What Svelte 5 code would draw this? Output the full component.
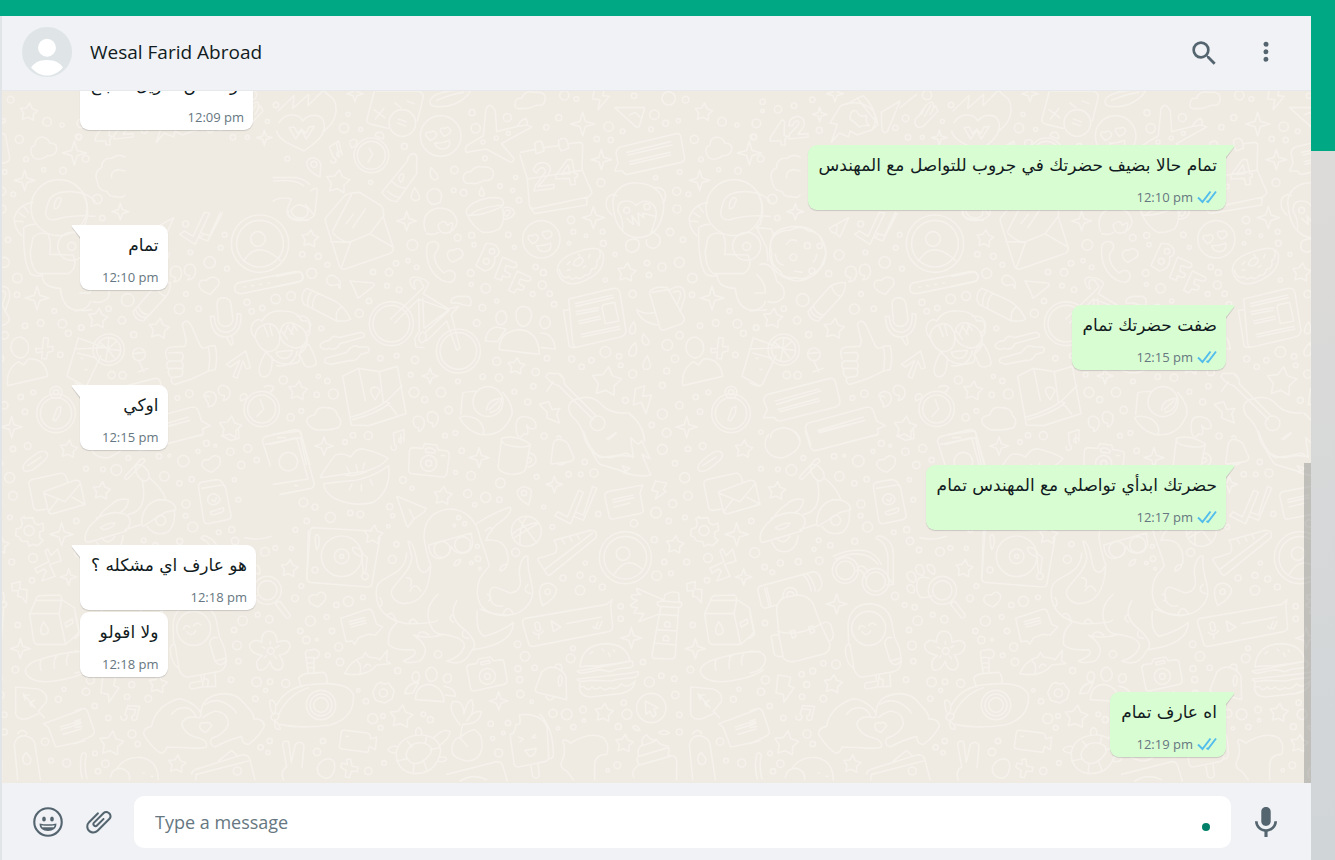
<script lang="ts">
	import { onMount } from 'svelte';

	type Message = { text: string; time: string; out?: boolean; tail?: boolean };
	type Sheet = {
		x: number;
		y: number;
		circles: number[][];
		stars: number[][];
		sparkles: number[][];
		paths: string[];
	};

	const contact = 'Wesal Farid Abroad';

	const messages: Message[] = [
		{ text: 'لو ممكن تحويل المبلغ', time: '12:09 pm' },
		{ text: 'تمام حالا بضيف حضرتك في جروب للتواصل مع المهندس', time: '12:10 pm', out: true, tail: true },
		{ text: 'تمام', time: '12:10 pm', tail: true },
		{ text: 'ضفت حضرتك تمام', time: '12:15 pm', out: true, tail: true },
		{ text: 'اوكي', time: '12:15 pm', tail: true },
		{ text: 'حضرتك ابدأي تواصلي مع المهندس تمام', time: '12:17 pm', out: true, tail: true },
		{ text: 'هو عارف اي مشكله ؟', time: '12:18 pm', tail: true },
		{ text: 'ولا اقولو', time: '12:18 pm' },
		{ text: 'اه عارف تمام', time: '12:19 pm', out: true, tail: true }
	];

	let draft = '';
	let chat: HTMLElement;

	// wallpaper tile, drawn at three times its size and repeated sideways
	const tile = 2025;
	const copies = [-1, 0, 1, 2, 3];

	const sheets: Sheet[] = [
		{
			x: 0,
			y: 0,
			circles: [
				[204,70,6],[192,111,14],[242,115,6],[373,166,9],[22,203,7],[272,274,6],[523,237,11],[521,298,7],[551,305,10],[576,65,9],
				[682,80,12],[587,112,14],[609,153,6],[649,141,6],[685,127,6],[615,202,7],[707,259,6],[660,285,7],[698,298,6],[717,328,8],
				[799,109,8],[836,80,9],[853,13,14],[889,24,7],[986,107,14],[1028,121,7],[950,144,8],[992,147,8],[1062,14,8],[1166,22,20],
				[1217,26,10],[1123,71,14],[1157,97,9],[1195,89,6],[1113,115,7],[1243,145,12],[1326,92,13],[1371,102,6],[1422,138,8],[1263,205,7],
				[1316,236,6],[1374,239,10],[1199,243,7],[1127,260,6],[963,275,12],[1190,301,12],[1225,310,7],[1191,354,12],[873,387,11],[880,422,7],
				[918,434,5],[867,457,5],[968,422,7],[970,457,9],[1170,423,11],[1209,446,8],[1005,490,6],[533,440,10],[575,433,9],[582,461,6],
				[685,431,8],[703,469,6],[397,462,16],[348,517,8],[384,509,6],[410,529,7],[327,544,11],[279,543,8],[67,490,8],[115,496,9],
				[142,521,7],[95,547,15],[33,615,13],[321,584,7],[357,596,8],[267,630,8],[238,667,12],[572,546,10],[574,580,6],[617,592,14],
				[650,630,6],[607,650,10],[590,696,10],[767,528,8],[790,545,9],[787,582,12],[758,609,7],[809,608,8],[822,640,8],[1101,516,8],
				[1146,528,12],[1107,552,8],[1198,514,15],[1237,561,14],[976,567,6],[1058,609,11],[1236,611,8],[1199,733,11],[1162,762,16],[1260,704,8],
				[1307,696,10],[1348,660,7],[1372,698,13],[1390,727,9],[1429,710,8],[1366,791,8],[1185,803,11],[1160,840,9],[1058,849,12],[1017,796,8],
				[1022,823,7],[976,783,16],[934,808,8],[875,804,9],[905,827,8],[801,802,8],[650,811,12],[608,857,8],[657,860,11],[767,843,11],
				[760,886,8],[703,902,7],[743,933,9],[534,871,7],[405,807,11],[350,794,7],[301,802,8],[124,712,7],[115,856,6],[142,870,8],
				[160,909,15],[110,911,8],[64,960,7],[32,979,11],[10,867,12],[392,851,7],[402,904,15],[434,926,9],[483,904,14],[506,957,11],
				[495,1034,7],[526,1026,7],[792,1035,9],[1036,928,9],[1147,883,9],[1147,969,15],[1198,943,11],[1247,918,8],[1260,962,8],[1285,904,7],
				[1115,1002,8],[1160,1025,13],
				[482,135,61],[274,193,52],[274,193,42],[367,96,40],[784,445,56],[334,698,66],[334,698,55],[535,780,66],[535,780,55],
				[1353,967,58],[1353,967,47],[1353,904,18],[1353,904,8],[624,932,45],[953,997,22],[1362,350,84],[1400,466,12],[1400,466,42],
				[636,481,8],[619,511,9],[1040,358,9],[1101,347,9],[102,220,9]
			],
			stars: [[174,273,37],[90,443,27],[1040,545,29],[1271,64,28],[54,900,30],[709,826,26],[980,873,46]],
			sparkles: [[908,99,36],[964,206,31],[1259,268,31],[1408,186,36],[380,390,30],[940,380,33],[1296,621,36],[450,855,24],[1220,1008,32],[225,8,24]],
			paths: [
				// flaming heart
				'M-3 95C20 60 60 70 68 90C85 68 125 65 132 95C140 135 100 160 72 180C45 165-5 150-10 120M27 110l20 34 18-26 14 26 24-38-16 2-10 20-12-14-12 14-10-20zM-6 60L42 14L38 52L86 10L84 44L132-4C140 20 170 10 168 60C165 90 150 105 132 120',
				// game box
				'M283 0L260 88Q262 98 275 100L325 112M290 0H415Q430 5 430 18L412 90M282 56l32 24M312 52l-26 32M355 84l24 8M352 96l24 8M382 30l20 8M345 36l18 14',
				// leaf and faces
				'M450 30C455 10 500-8 572 0C545 40 500 50 465 46Q450 44 450 34M470 28Q510 10 550 4M438 134q-4-14 14-10 8-10 18 4 0 14-20 20zM482 122q-4-14 14-10 10-8 16 6 0 12-20 18zM464 156q24 2 44-8 6 24-20 26-20 0-24-18zM745 444q-4-14 14-10 8-10 16 4 0 14-18 20zM788 432q-4-14 12-10 10-8 16 6 0 12-18 16zM770 464q22 2 42-8 4 24-18 26-20 0-24-18z',
				// plane, clouds, bolts
				'M618 54Q630 30 646 60L650 122L712 106Q722 86 738 82Q744 96 740 102L755 108L664 158L702 202Q700 216 690 212L618 174L560 184Q552 176 560 164L610 134zM712 106l28-4M705 40q0-20 20-18 8-24 36-18 40-4 34 24-2 18-24 14-30 14-46 10-22 4-20-12zM550 262q0-22 22-20 16-20 36-14 34-2 32 24-4 20-28 16-24 14-38 8-22 6-24-14zM942 0l-4 24 22 2-6 30 34-40-20-2 6-24M1066 894l28-10-6 32 26-4-16 56-14-34-24 8zM778 940l28-8 10 24 24-4-10 16 8 28-38-16 2-16z',
				// paper planes
				'M1004 50H1094L1078 106Q1070 112 1064 104zM1048 72l18-8 14 14M210 570l70 6q6 6 0 10l-46 36-10-26z',
				// notes and clock hands
				'M152 208a8 8 0 1 0 8-8L148 168l28-18 10 42a8 8 0 1 0-8 6L170 160M268 172l10 18-14 24M210 150q16-10 22 2-4 16-18 18-6-10-4-20zM285 134q4-14 20-10 10 12 4 20z',
				// drops, pin, lipstick
				'M120 258Q80 240 80 215Q86 196 106 202Q124 210 122 226zM452 230q24 20 22 32-8 10-20-2-6-12-2-30zM404 290q18 24 14 34-14 10-24-2-2-14 10-32zM604 288q12 18 8 26-10 4-14-4 0-10 6-22zM306 304L382 210Q384 190 400 188Q414 192 410 210V248L350 332Q322 330 306 304zM336 272q20 20 44 20M322 300q18 18 40 20M356 262q6-18 14-12 4 16-8 24z',
				// open envelope
				'M136 382L192 316Q200 306 238 304L300 342Q314 352 310 378L340 470Q340 484 328 488L196 534Q182 536 178 524L136 390zM158 420L214 312M158 426Q190 458 212 452L270 428L310 376M152 452L212 454L184 530M270 428L338 468M198 398l22-28M218 410l38-56',
				// telescope
				'M-20 260H50Q80 268 88 280M-20 270Q50 264 70 284M92 300Q110 284 112 300L104 372Q80 396 40 386Q14 372 24 348L34 324Q0 316-20 330M32 360q20-32 50-8 8 24-16 30-26 0-34-22M76 340l24 30',
				// baby, cup
				'M442 308q10-18 30-14 20 14 8 40-20 12-32 0-10-14-6-26zM436 420Q420 368 468 352Q520 346 532 392Q526 420 500 426Q478 430 474 402Q496 380 502 404Q530 380 510 426M440 428Q460 434 476 424M562 372Q550 356 580 336Q630 312 666 324Q680 344 650 354Q600 376 562 372zM562 372Q578 408 608 424Q640 426 660 412Q676 390 668 354M572 372Q590 350 668 342M672 350q26-6 32 16-12 20-34 18M672 370q4-16 18-12 2 12-10 18z',
				// calendar
				'M722 184L762 176M792 170L838 164M866 158L900 154Q910 156 908 166L906 236L936 304Q934 312 924 318L764 352Q750 354 748 342L742 264L720 192M742 264L904 238M752 352L764 368L920 342L922 318M764 156q22-14 24 6l4 18-24 8zM836 148q20-14 26 4l4 20-22 8q-10-16-8-32zM760 238Q768 210 796 216Q820 226 806 250L774 286L822 280V292L762 300L766 284L796 244Q796 230 784 230Q772 236 770 246zM862 206h14l8 42h8v10l-8 2 2 20-14 2-4-20-40 2v-12zM864 222l-20 28 26-2z',
				// speech bubble
				'M1008 186Q1010 174 1020 168L1190 128Q1200 126 1202 136L1214 200Q1214 210 1204 214L1042 250Q1034 252 1028 240L1004 240L1014 216zM1040 184L1172 152M1044 192L1176 162M1048 212L1170 184M1050 220L1172 192M1280 190q-8-22 10-28 0-24 24-24 18 6 20 18 26 0 20 24-8 16-26 14-24 18-42 6z',
				// monkeys
				'M1000 350C990 300 1030 274 1070 276C1120 276 1160 310 1150 360C1140 420 1110 440 1070 440C1030 436 1004 400 1000 350zM996 372Q970 350 982 320Q1000 304 1010 314M1122 290Q1160 288 1156 320Q1154 334 1148 336M1014 360Q1012 328 1042 330Q1062 332 1068 344Q1086 324 1110 334Q1136 350 1126 386L1112 428M1014 360Q1030 384 1028 414M1040 382L1060 400L1056 374L1078 404L1074 366L1092 380L1088 366L1126 376M1040 452Q1030 480 1056 484Q1084 478 1076 450Q1060 436 1040 452M1100 446Q1094 470 1122 472Q1148 462 1138 436L1116 422',
				// phone, heart, letters
				'M440 474Q440 448 466 452Q480 458 474 474L464 490Q460 520 492 546Q510 530 524 546Q530 564 512 574Q480 574 456 540Q438 510 440 474M502 492q0-18 20-14 10-12 24 2 8 14-6 22l-22 12q-14-8-16-22zM618 458q36-4 40 26-4 12-14 14 4 36-30 42l-26-16zM668 498l40 18q8 14-8 14l-22-6-4 16 16 8q4 14-14 10l-8-4-4 14-20-8zM712 540l38 18q8 14-10 12l-20-6-4 14 16 8q2 14-14 10l-8-2-8 12-16-8z',
				// donut
				'M832 540Q830 500 900 480Q960 460 970 490Q976 540 920 566Q850 600 832 540M838 536Q850 570 866 556Q876 572 888 558Q900 570 914 552Q930 556 934 536Q956 530 950 510Q966 498 958 478M880 520q4-18 24-20 12 8-2 20-14 10-22 0M870 512l-8 8M930 490l-4 10M900 496l-4-6M862 538l8-2M910 530l8-6',
				// pencil, spanner, toothpaste
				'M66 626Q64 604 80 592L160 628Q190 642 212 684Q204 692 170 690L72 640zM98 598Q80 616 84 642M114 606Q96 624 98 650M170 690Q164 660 184 648M-10 556L60 542Q76 556 64 570L-10 586M120 766Q120 752 148 748Q160 730 176 740L242 724Q256 726 252 738L180 758Q170 780 148 772Q130 780 120 766zM134 814Q130 800 150 798L200 784Q220 756 236 768L262 768Q272 774 264 784L242 790Q230 812 212 808L150 820zM140 570q0-20 22-16 24 12 18 38-4-2-6-12-28 10-34-10z',
				// bicycle
				'M332 684L412 608L432 588L420 568Q396 560 404 588Q410 600 398 590Q380 562 402 558Q440 562 446 578L430 608L506 654L536 646M344 696L416 624M416 624L418 720L404 742L408 768L432 770M428 622L432 712L502 660M420 626L508 658L438 722M500 690L440 750M500 690L530 778L540 772L514 670L536 646M514 636Q508 622 534 616H560Q578 618 572 644Q550 644 536 636zM418 734q10-20 20-4 4 18-12 26-14-8-8-22z',
				// people
				'M708 672q0-26 24-26 26 4 22 32-6 28-26 28-20-6-20-34zM648 678q4-22 22-18 14 10 8 30-8 14-22 10-10-10-8-22zM780 692q4-20 20-16 16 12 8 30-8 10-20 6-10-8-8-20zM658 776Q658 720 718 716Q776 720 778 790zM616 750Q620 712 650 708L678 714L652 752zM782 726Q820 726 826 774L784 770',
				// newspaper, oil can, lines
				'M866 624L1000 592Q1016 590 1020 606L1038 720Q1034 736 1020 738L892 768Q880 770 878 758zM866 656L850 658L868 766Q878 772 888 768M886 638L998 612M888 646L1000 620M888 662L956 650M890 670L954 658M896 690L960 676M898 698L962 684M904 730L1018 706M906 738L1020 714M966 650Q966 642 974 640L1004 634L1016 690L976 698zM1108 604Q1120 584 1162 590L1212 680Q1214 692 1204 698L1150 718Q1138 716 1138 704zM1116 604L1166 596M1126 664Q1096 672 1070 656Q1080 692 1132 702M1170 596Q1216 570 1214 620L1200 662M1180 604Q1202 594 1202 612L1192 640',
				// drops
				'M1062 692Q1040 720 1054 728Q1070 730 1066 706zM1090 728Q1080 752 1096 762Q1112 762 1106 748zM1066 754Q1038 782 1050 794Q1070 800 1070 772zM1102 794Q1082 822 1092 834Q1110 838 1112 822z',
				// map, cloud
				'M188 856L236 832L298 842L352 826L378 968L266 1004L214 1002zM236 832l20 96M298 842l12 90M214 978Q280 960 320 930L366 884M218 986Q290 968 330 936M320 930L350 970M286 926Q266 902 274 892Q292 882 300 900zM84 1000Q72 976 104 972Q112 944 138 950Q170 950 172 974Q190 986 176 1010Q150 1018 128 1016Q100 1022 84 1000',
				// turtle and planet
				'M542 970L548 906Q560 900 590 902M668 904Q700 940 696 970Q670 1040 600 1030Q560 1020 538 980Q560 970 590 984Q616 1004 610 1028M620 958Q620 926 664 922Q664 960 630 964M628 956L656 930M400 990q0-16 18-14 18 6 14 26-4 16-16 20v-12q-16 2-16-20zM442 976q0-16 18-14 18 6 14 26-4 16-16 20v-12q-16 2-16-20zM710 1024Q700 970 742 978Q770 984 768 1010Q750 1020 740 1002Q750 1040 732 1028Q716 1050 710 1024',
				// guitar
				'M798 858Q800 842 820 848Q850 840 854 880L950 976M940 986L836 884Q816 880 798 858M874 974Q850 930 900 922Q940 910 968 944Q990 968 1040 966M874 974Q906 1000 916 1050Q940 1100 990 1100Q1020 1090 1050 1096M1046 966Q1090 1000 1094 1050M980 1044L1008 1024M800 900l20-28M836 848l16 16',
				// helmet figure
				'M1328 340Q1336 300 1400 302Q1450 306 1470 330M1328 340Q1310 390 1350 386Q1400 370 1470 376M1348 352Q1346 330 1360 320Q1374 320 1366 334Q1360 356 1348 352M1284 334Q1240 340 1228 380Q1226 410 1250 434M1290 400Q1270 400 1256 410Q1254 520 1278 550Q1300 560 1310 552M1242 366l18 12M1232 390l22 2M1256 346l14 18M1284 440Q1300 420 1330 430Q1340 460 1334 490L1404 492Q1420 530 1390 548L1300 548Q1276 530 1276 480zM1312 550Q1310 590 1366 592Q1370 640 1400 654Q1420 662 1460 656M1430 550Q1460 580 1455 606H1424',
				// person, glass, lens
				'M1218 764Q1222 738 1248 738Q1276 750 1270 780Q1260 804 1240 800Q1216 790 1218 764zM1208 884Q1202 836 1240 812L1256 822L1270 804Q1320 800 1328 856zM1292 772l20 2 4-34 14 2-2 26 16-2v14l-16 4-4 20-14-2 2-20-18 4zM1420 740L1386 856L1440 886M1418 786L1470 800M1344 986l12-34 12-6-2 22-14 22z',
				// masked monkey, left edge
				'M52 676Q84 670 92 700Q90 720 78 726Q90 770 60 786M52 780Q40 830-10 824M58 790Q64 764 86 760Q110 800 108 820Q90 834 74 824zM4 720L22 744M20 706L40 730M38 698L52 718'
			]
		},
		{
			x: 0,
			y: 1020,
			circles: [
				[219,13,8],[265,14,12],[195,33,7],[545,59,8],[527,124,6],[573,134,13],[661,156,14],[369,147,10],[396,172,6],[770,137,7],
				[866,130,8],[902,130,7],[942,126,12],[914,93,8],[1147,55,15],[1224,54,8],[1268,45,10],[1185,97,8],[1214,140,15],[1224,194,13],
				[1178,218,12],[1128,245,16],[1062,277,11],[1166,270,8],[1215,259,7],[1414,270,8],[955,249,8],[791,228,6],[817,288,7],[658,206,8],
				[617,199,15],[584,221,6],[563,188,12],[329,227,9],[338,254,6],[325,286,5],[349,340,8],[337,385,12],[211,246,8],[241,250,10],
				[151,259,15],[105,228,9],[70,214,13],[80,270,8],[46,296,7],[34,352,6],[64,465,7],[45,502,10],[205,511,15],[169,522,8],
				[249,499,7],[140,558,7],[91,570,15],[61,600,8],[79,627,11],[111,626,4],[156,600,8],[176,648,12],[143,673,7],[180,693,11],
				[353,719,9],[235,778,5],[258,811,8],[278,863,15],[309,855,7],[302,890,7],[129,930,8],[111,963,11],[312,996,7],[265,1020,11],
				[430,850,7],[451,866,9],[474,670,11],[707,364,12],[713,640,10],[735,676,14],[714,713,9],[764,710,8],[719,746,9],[721,789,11],
				[755,812,5],[684,876,8],[632,878,8],[638,922,6],[670,906,5],[656,966,12],[819,847,12],[860,850,16],[909,836,10],[912,868,5],
				[880,888,8],[834,892,5],[872,682,13],[879,652,7],[849,441,9],[900,433,9],[938,444,9],[916,396,6],[900,478,14],[967,468,9],
				[1022,526,8],[1022,563,8],[1130,434,14],[1153,393,8],[1173,427,7],[1123,326,9],[1220,393,9],[1284,381,13],[1281,448,8],[1238,582,8],
				[1089,693,8],[1108,753,15],[1144,734,8],[1183,743,8],[1231,716,10],[1186,792,11],[1198,851,8],[1198,903,9],[1031,815,8],[1041,850,15],
				[1015,887,9],[1012,1003,10],[983,1018,5],[1360,805,9],[1377,775,6],[1320,932,11],[1338,989,7],[1385,996,12],[17,757,12],
				[446,97,24],[446,97,9],[739,301,45],[185,376,61],[185,376,22],[185,376,6],[255,436,10],[1036,380,78],[1036,380,64],[1029,368,20],
				[123,822,44],[123,822,22],[123,822,33],[622,736,24],[622,736,9],[1114,831,44],[1272,299,15],[310,786,12],[486,355,24],[548,341,24],
				[105,417,9],[803,482,8],[732,186,8],[25,92,28],[594,383,8],[592,346,6],[574,396,5],[600,413,4],[536,260,6],[554,278,6],[523,283,4]
			],
			stars: [[489,195,29],[280,312,30],[28,413,27],[1391,55,28],[1185,342,28],[972,846,29],[1033,938,28],[364,858,36]],
			sparkles: [[132,45,28],[597,80,30],[823,160,25],[1370,310,35],[1391,438,25],[1054,621,32],[1246,653,30],[656,810,28]],
			paths: [
				// phone, lips
				'M-30 40L50 20L84 144L-20 160M-20 10L60 0L102 156Q104 168 94 172L0 190M44 164h8M122 136Q150 90 166 72Q190 64 212 78Q228 50 250 54Q300 66 324 82Q310 104 260 120L122 140zM132 158Q150 156 200 150Q260 150 326 104Q334 180 280 214Q220 230 160 200Q130 180 132 158M192 130Q210 140 260 122M200 108l10 20M228 100l4 20M254 96l-6 18M208 176l8-16M244 180v-20M278 162l-8-16',
				// camera, note
				'M388 60Q390 50 400 50L428 52L434 38L470 42L474 56L500 60Q508 62 508 72L500 130Q496 138 488 138L394 128Q386 126 386 116zM436 54q14-8 30 4l-2 8-26-2zM484 74h10M334 46a8 8 0 1 0 10-4L340 6L372-4V30a8 8 0 1 0-8 6L362 10',
				// mug, bell
				'M664 22Q710 10 752 40Q740 52 700 46Q660 40 664 22zM664 28L654 108Q660 128 700 130Q736 128 738 110L750 44M744 66Q770 66 768 92Q756 112 738 106M742 80Q756 78 754 90Q748 98 740 94M812 96L820 38Q826 22 842 26Q864 32 866 44L882 80Q880 90 870 92L824 98Q812 100 812 96M830 18q8-8 14 2M832 98q10 8 24-2',
				// guitar foot, flame
				'M910 0Q930 60 960 80Q1000 78 1040 66L1060 80L1052 20L1074 40L1086 30L1110 84L1086 70L1112 132Q1080 140 1030 124L1050 112L1026 104L1040 124L960 100Q940 80 910 0M986 26L1008 8',
				// paper clip, envelopes
				'M1254 112Q1250 96 1300 64Q1326 54 1328 74Q1324 88 1280 118Q1256 126 1254 112M1268 104L1308 78M1272 160Q1270 150 1280 146L1370 126Q1384 128 1388 154M1272 160L1286 230Q1290 240 1300 238L1324 234M1316 182L1410 148Q1422 146 1426 156L1440 220L1344 248Q1332 250 1330 240zM1316 186L1380 212L1426 158M1332 240L1358 206M1440 220L1400 198',
				// pins, ticks, speech
				'M746 222Q708 200 712 180Q730 156 754 178Q754 196 746 222zM824 254L834 242L862 258L896 178L910 184L872 278zM888 244L910 252L938 166L950 172L910 268L880 256M974 194Q976 184 984 182L1088 162L1080 186L1090 240Q1088 246 1080 248L1000 264Q990 266 988 258zM998 206L1060 192M1000 214L1062 200M1002 228L1050 216M1126 150L1160 156L1150 176L1158 182L1126 204L1134 182L1116 178z',
				// paper plane
				'M350 196L438 232L434 242L402 264L384 288L380 284zM388 236L402 264',
				// turntable
				'M96 290L276 300M300 320L276 458Q274 468 264 468L90 454Q80 452 80 442L90 300Q92 288 104 290M106 314q10-10 12 14 0 20-8 28-6-20-4-42zM218 350Q240 346 250 370L262 380L256 426M218 350Q214 366 246 378L250 426',
				// octopus
				'M432 322C430 260 470 236 512 234C560 236 590 270 600 320C610 350 616 360 628 404C610 430 590 440 592 490C598 540 630 550 680 552C740 552 760 500 758 480C756 440 740 430 744 376C730 370 716 400 718 430C726 460 720 484 690 486C650 470 640 460 630 480C626 520 650 530 668 524M432 322Q440 370 452 402C450 480 420 518 370 518C330 510 330 480 340 470C360 440 390 420 396 380L384 330C400 330 410 380 412 400C420 430 440 430 448 408M380 366C376 440 300 430 290 470C280 540 330 570 380 578C430 580 470 572 472 568M590 278Q630 250 690 228Q700 240 670 266Q630 290 618 328Q680 320 684 380Q686 410 664 420M474 490Q430 530 450 580Q460 612 490 610Q560 620 552 650Q540 680 500 690Q550 710 574 660Q600 640 556 598Q500 560 530 510M350 576Q320 600 326 640Q340 660 400 656Q420 670 370 690Q380 700 420 690Q460 650 400 612Q440 626 490 610M592 540Q586 600 612 616Q670 600 700 574Q700 640 580 656M600 534Q660 560 690 552M446 342L574 306L578 340Q570 370 540 366Q520 364 514 346Q508 380 480 382Q450 384 446 342zM380 440q20 0 12 26M390 480q16-30 32 0M300 500q14 20-2 28M320 554q20-20 28 18M388 574q10-20 24 2M616 300q20-20 20 0M660 420q0-20 20-20M744 460q-20 20 8 28M670 548q12-30 30 0M622 490q20 10 4 20M520 550q-20 10 0 24M550 600q-10 20 16 22M410 620q10-30 36-8M522 404q4-20 20-18-4 20-20 18',
				// basketball, sneaker
				'M716 264L770 336M702 320L776 276M740 256Q716 290 720 340M774 274Q730 280 696 310M822 328L930 298Q954 296 948 320L810 432Q800 434 796 422L774 388Q770 380 790 378L826 366Q836 350 822 328zM796 414L938 306M846 324l8 14M868 316l8 14M890 310l8 14',
				// person on badge
				'M1002 430Q1040 370 1086 414',
				// gear, bandage, bolt
				'M1258 262l26-2 4 16 12 6 14-6 2 22-12 6v16l10 8-16 16-14-4-12 6-4-14-18-2-8-12-10-4 2-20 14-4 4-12-4-14 10-8zM1320 360l8-6 10 20 20-20 10 36-34 10 16 36-40 14 14-30-8-6-20 12-6-14 42-20zM1220 458L1246 452L1244 474L1266 476L1264 516L1250 498L1238 496L1240 478L1222 480zM290 760l12-6 12 6 12-4 8 12 8 10-2 12-4 14-12 6-10 6-14-4-12-4-6-12-4-12 6-12z',
				// heart, chat note
				'M86 506Q88 488 110 492Q124 474 136 492Q140 504 128 516L114 528Q88 520 86 506zM182 562L266 534Q276 534 278 544L290 580L308 588L286 612L264 610L236 620L224 640L216 630L198 632zM208 572L254 560M210 580L256 568M214 588L258 576',
				// submarine
				'M-10 822Q20 764 100 760Q200 750 220 790Q226 860 150 882Q60 894 0 880M64 768L56 742Q60 732 80 728L130 724Q140 726 142 754M84 724L76 666Q78 656 90 658Q110 650 118 666Q116 686 102 680L102 722M82 680h20M84 696h18M86 710h18',
				// fish, people
				'M194 728Q210 690 248 678L256 664L266 678Q290 680 300 686L322 658L320 690L332 698L290 702Q260 740 194 728M232 690Q246 700 240 732M252 710Q262 692 272 704M438 724q6-18 22-14 16 12 10 30-8 14-22 10-12-10-10-26zM396 736q4-18 18-12 8 12 2 24-12 8-18 0zM490 740q6-16 20-10 8 12 0 22-12 6-18-2zM406 806Q408 760 450 760Q490 770 492 812zM374 788Q380 756 416 754L398 786zM492 766Q526 770 526 796L496 792',
				// second camera
				'M560 710Q560 702 570 700L590 698L596 684L632 678L640 690L662 686Q670 686 672 694L682 750Q680 758 672 760L582 780Q574 780 572 772zM602 694l26-6 2 8-26 6z',
				// plant
				'M540 882Q500 830 520 812Q550 806 552 850Q560 810 576 806Q588 840 560 870Q580 836 604 842Q600 880 548 880L540 920Q560 900 584 896Q610 910 606 950Q600 990 560 990Q510 980 516 950Q520 920 540 920M540 920L562 946',
				// turtle
				'M348 966Q360 910 430 912Q480 920 482 960Q470 1030 400 1028Q350 1020 348 966zM378 970Q390 930 430 936Q460 944 452 966Q430 1000 400 998Q380 990 378 970M408 912Q404 890 418 890Q428 896 424 912M462 920Q490 890 510 902Q510 920 478 944M350 946Q330 944 324 956Q330 966 348 966M478 980Q500 974 500 986Q490 996 472 990M382 930l14 18M440 914l-4 22M480 950l-28 6M350 990l28-6M400 1026l2-28M440 1016l-10-28',
				// camcorder, fingers
				'M178 946L184 904Q186 896 196 898L262 906Q272 908 272 924L290 918L286 956L268 946L264 964L188 954Q178 954 178 946M198 916h8M8 940Q10 926 26 932L34 994L46 940Q64 926 72 944L66 1010M8 940L20 1008Q0 1020 10 1046M140 984Q166 980 164 1010Q160 1040 140 1042Q110 1036 112 1010Q120 988 140 984zM200 986l12-2 4 22 18 2-2 14-18-2-6 20-12-2 2-20-16-10 4-12 16 4z',
				// ice cream
				'M690 910Q706 910 708 880Q726 886 718 852Q750 846 780 862Q804 880 802 900L806 978Q804 990 794 992L714 1008Q704 1008 702 998zM780 850Q820 890 820 970Q820 984 806 984M716 918l14 6-10 8M766 910l-10 10 12 0M734 958L768 952Q766 976 748 976zM752 1000L758 1036Q770 1048 778 1034L774 996',
				// ticket, note
				'M728 576Q726 566 736 562L980 520L996 506L992 524L998 590Q996 600 986 602L760 646Q748 648 746 638zM764 578q8-10 14 0l4 18q-8 8-14 0zM760 604q16 14 30-4M776 610v14M814 570L842 588L820 602zM860 578L964 558M938 586l8 8 8-22M950 592l6 2 10-22',
				// burger
				'M900 708Q904 640 980 638Q1040 640 1050 690Q1020 696 960 704Q920 704 900 708zM892 720L940 712L1056 690Q1066 704 1050 710L1010 714L990 722L960 716L920 724Q896 730 892 720M892 744L950 738L1040 728L1074 722Q1080 736 1060 740L1020 744L990 750L930 748Q892 756 892 744M900 756Q896 772 912 766Q922 784 936 768Q950 780 960 768Q974 782 990 770Q1010 780 1024 758Q1040 776 1066 750M898 770Q900 796 930 798L1020 788Q1060 780 1064 756M930 668l8-6M966 654l6 6M990 676l-4-10M1000 656l4 6',
				// lighthouse
				'M1152 508L1154 492Q1172 478 1196 486L1198 512M1132 514Q1130 524 1140 526L1198 530Q1208 524 1204 514L1142 510zM1142 528L1116 672Q1116 682 1126 682L1176 684Q1186 682 1186 672L1196 530M1136 550L1194 554M1132 596L1190 600M1124 636L1188 642M1154 586v-8q8-12 16 0v10zM1150 628v-8q8-12 16 0v10zM1150 506L1070 472Q1070 486 1082 490L1056 492Q1048 504 1072 508L1052 522Q1054 530 1072 530L1062 546L1092 548L1076 572L1140 548',
				// milk, bread
				'M1274 548L1292 508Q1294 496 1304 494L1362 492Q1370 494 1370 506L1408 530L1422 600Q1420 610 1410 616L1382 640L1296 640Q1288 638 1286 630zM1274 548L1362 548L1382 640M1362 548L1370 508H1292M1316 572Q1300 600 1312 610Q1330 612 1330 598Q1326 586 1316 572M1380 576L1402 564L1404 576L1384 588zM1262 726Q1256 706 1290 690Q1380 660 1440 662M1262 726Q1280 760 1350 750Q1420 740 1450 716M1308 718Q1300 690 1314 682M1348 712Q1344 680 1358 672M1386 702Q1380 676 1398 662',
				// second bell, pin, cursor, leaf
				'M766 774L786 722Q810 700 836 714Q862 730 858 746L860 806L778 786Q764 784 766 774zM836 740q6-16 10 0 2 22-8 26-6-10-2-26M824 710q4-16 20-8l2 14M798 796q8 20 24 4M788 524Q770 480 786 462Q810 446 830 474Q830 500 788 524zM1096 810L1134 830L1122 834L1128 852L1118 858L1110 840L1098 850zM1232 768L1300 774Q1330 786 1324 812Q1310 830 1300 840L1318 860M1232 768V850Q1242 870 1270 862L1300 848M1254 788L1290 830M1260 806l-4-14 18 0M1280 826l-6-10 14-8',
				// splash, cream, bottle
				'M848 930Q850 920 872 936Q930 900 970 920Q990 940 980 970Q946 970 944 1000L944 1046M848 930Q860 960 846 990Q836 1010 860 1020L880 1046M1100 910Q1080 926 1088 940Q1068 956 1076 974Q1066 990 1078 1000Q1050 1020 1062 1040M1100 910Q1110 930 1130 926Q1136 940 1154 944Q1174 940 1164 974Q1194 970 1190 1000V1046M1088 944L1126 930M1076 976L1164 950M1078 1002L1170 976M1228 940Q1234 914 1260 914Q1286 920 1290 940L1306 1046M1228 940L1238 1046M1238 908q14-20 28 0M1264 964Q1246 980 1258 998Q1276 1006 1278 984zM1316 878L1430 836M1316 878L1330 890L1352 948L1440 930M1366 888L1424 870M1368 896L1426 878M1374 910L1428 894M1058 888q10-12 22 10-12 4-22-10M1136 904q18-12 32 2-18 10-32-2',
				// tablet
				'M500 1030L650 992Q664 992 668 1004L682 1050M540 1050Q580 1026 620 1046'
			]
		},
		{
			x: 1410,
			y: 0,
			circles: [
				[38,32,8],[38,60,5],[84,55,11],[132,44,8],[187,26,8],[19,97,13],[10,138,9],[208,118,9],[32,203,10],[467,82,10],
				[436,110,8],[474,139,8],[517,139,6],[577,91,6],[603,42,8],[531,12,14],[67,324,14],[82,381,8],[332,399,9],[267,492,15],
				[346,484,7],[404,514,17],[437,470,7],[449,431,7],[456,533,7],[236,548,9],[158,627,19],[333,609,7],[313,654,15],[371,653,8],
				[101,653,8],[18,710,8],[141,688,11],[176,731,9],[110,852,11],[143,853,11],[307,921,7],[343,908,11],[516,634,9],[530,661,8],
				[562,651,8],[602,624,14],[33,1023,6],
				[555,458,86],[555,458,70],[549,444,22],[101,776,47],[101,776,36],[192,790,19],[560,954,53],[560,954,42],
				[130,499,10],[172,464,9],[186,540,9],[209,465,8]
			],
			stars: [[69,683,31],[252,714,32],[466,1010,35]],
			sparkles: [[209,70,22],[568,140,23],[136,362,25],[255,8,25]],
			paths: [
				// 42
				'M96 86L62 138L60 150H92L94 162H106L104 146L112 136L102 134L104 92zM116 104Q118 76 146 76Q170 86 160 108L144 130L174 128V138L116 144L118 130L146 100Q148 88 138 90Q130 94 128 104z',
				// rocket, plane
				'M244 154L262 100L240 96L272 44Q330 20 370 60Q384 90 366 116L344 124L322 132L300 120L296 138L268 126zM300 84q0-30 20-24 6 20 30 14-4 22 8 30-20-2-30 4-10-12-28-24M290 40L322 22L384 100L364 118M322 22L340 14Q370 40 384 100M394 64L450 30L412 122Q400 130 396 114zM450 50L500 10',
				// glove, flower
				'M496 100Q490 84 506 76Q530 30 548 34Q556 50 540 70L556 44L564 60L520 106Q502 114 496 100M514 70l14-28M524 76l18-34M66 270Q56 240 80 230Q80 200 110 202Q130 186 150 198M66 270Q70 300 96 302Q104 320 124 316Q140 324 150 312M110 260Q106 240 130 236L150 240',
				// cookie
				'M60 470Q60 420 110 410Q170 396 210 436Q240 480 220 520Q190 568 140 570Q80 560 66 520Q56 500 60 470M68 440Q90 416 120 418Q150 400 176 420Q210 424 216 450Q236 480 220 510Q210 540 186 548Q160 570 140 560Q100 564 90 540Q60 520 66 490Q56 460 68 440M110 460Q120 440 140 450M76 490Q80 520 100 522M200 490Q196 510 190 512M134 540l22 4',
				// astronaut leftovers
				'M20 300Q50 350 30 400L18 410L64 414L70 430M20 410L50 470L54 510M30 520Q70 510 80 570Q110 590 100 620Q80 640 54 632M46 632Q40 656 0 660',
				// paper plane, ticks
				'M238 412L296 380L270 438L258 428L244 422zM262 404L258 428M314 430L328 420L354 436L388 364L404 366L360 460zM380 426L404 434L436 364M386 430L374 440L398 450L442 366M640 360q-10 26 60 28',
				// person
				'M506 510Q546 444 616 508',
				// quotes, heart, bar
				'M286 546q0-22 20-20 18 6 12 30-6 18-22 16 6-4 6-12-16-2-16-14zM328 540q0-22 20-20 18 6 12 30-6 18-22 16 6-4 6-12-16-2-16-14zM372 582Q372 564 394 568Q412 550 430 566Q436 580 424 590L406 610Q374 600 372 582zM480 598Q476 576 496 574L660 542Q684 540 684 560Q682 572 666 574L500 608Q484 608 480 598M506 588h6M530 584h6M554 580h6M578 576h6',
				// crayon
				'M174 662L240 586Q260 574 286 574Q288 600 270 620L206 690Q180 690 174 662M190 646Q200 672 224 672M182 656Q190 680 214 680M244 584Q250 610 272 616',
				// microphone
				'M426 640Q426 620 446 620Q466 622 468 640L474 686Q470 706 450 706Q432 704 430 690zM406 676Q410 740 456 738Q500 730 498 670L486 668Q490 720 454 724Q420 724 418 676zM454 738L468 762L474 758L470 736',
				// thumb
				'M322 700Q334 680 348 702L374 760Q380 780 400 766L420 764Q430 800 420 836L400 840Q380 850 350 864L300 880Q286 880 290 860M322 700L334 750L330 766L290 768Q270 770 272 790L276 804M280 786L320 784Q330 800 318 810L282 810Q270 820 278 832L322 832Q328 820 318 810M282 834Q276 850 290 860L318 856Q328 844 320 832M400 770Q408 800 400 838',
				// arrow
				'M454 820L512 780L526 830L514 834L504 810L486 862L474 856L494 808L466 828zM404 918q-16-10-12 8 10 10 8 22 22-4 24-26-2-22-24-20-14 4-14 16M430 900q-2-20 20-16 20 8 14 30-6 14-20 14 6-6 4-14-16 0-18-14',
				// monkey
				'M540 740Q520 720 534 696Q548 680 560 690Q580 656 622 660Q670 660 680 690Q704 684 704 706Q708 730 696 736M540 740Q560 790 590 780Q618 774 614 730Q600 690 570 700Q540 710 540 740M614 730Q620 690 650 696Q700 710 694 750Q676 780 650 768Q620 760 614 730M568 706l12 30M584 702l8 32M640 702l-12 26M656 704l-8 26M604 784Q620 780 652 778Q648 804 624 802Q608 800 604 784M572 784Q540 840 560 856Q590 868 592 800zM588 800Q620 830 670 814Q680 800 670 790',
				// slice, glass
				'M12 742L90 770L0 774M78 794L38 878Q30 888 20 884L0 876M18 802h6M58 800h6M30 836h6M98 774L101 742M98 774L124 752M98 774L134 778M98 774L118 800M98 774L92 808M98 774L72 752M192 810L206 842M190 842l30-10M176 788l30-4',
				// chat bubbles
				'M42 930Q40 916 54 910L240 862Q252 860 256 872L270 930Q270 942 258 948L90 990Q78 990 74 980L40 980L52 956zM76 930L206 894M80 940L212 900M84 956L206 922M90 962L208 930M166 1010Q166 1000 176 996L352 948Q366 948 370 960L380 990L406 1004L382 1014Q390 1030 376 1034M166 1010L182 1060M204 1018L340 978M208 1026L344 988M62 1040Q60 1016 100 1010Q140 1014 148 1046',
				// clock hands
				'M556 926L566 954L546 976M498 930Q490 910 510 908Q520 914 514 922zM568 888Q580 880 596 888Q594 900 586 902'
			]
		},
		{
			x: 1410,
			y: 1020,
			circles: [
				[33,113,7],[84,115,7],[124,117,16],[160,81,7],[252,76,8],[283,74,4],[325,90,17],[268,136,14],[313,157,8],[350,145,8],
				[369,61,6],[394,37,9],[421,44,4],[466,62,11],[518,52,12],[545,87,8],[499,102,11],[478,146,6],[490,206,7],[333,219,12],
				[332,254,7],[353,288,15],[314,331,9],[431,304,7],[470,296,9],[480,330,11],[507,357,8],[570,362,13],[601,351,7],[206,328,7],
				[241,343,8],[192,355,6],[208,389,11],[145,392,9],[91,396,9],[44,408,8],[67,424,7],[14,365,15],[435,495,11],[464,522,7],
				[494,529,8],[45,576,8],[477,597,8],[486,643,13],[490,691,8],[503,569,14],[548,551,7],[583,565,11],[468,746,8],[220,697,8],
				[258,700,13],[188,720,9],[155,730,8],[170,761,9],[156,797,8],[220,803,10],[46,747,12],[33,782,11],[59,825,8],[100,861,8],
				[171,909,12],[188,939,8],[60,967,7],[91,998,11],[69,1021,8],[545,753,14],[585,752,8],[541,803,8],[572,778,6],[557,949,8],
				[584,930,8],[579,965,6],
				[286,418,39],[286,418,28],[377,452,40],[377,452,29],[577,478,42],[577,478,29],[587,660,10],[356,592,51],[257,268,15],[487,1020,12]
			],
			stars: [[80,180,28],[249,760,29],[109,938,38],[306,1000,28]],
			sparkles: [[260,519,31]],
			paths: [
				// balloon
				'M56 10Q40 30 48 52Q60 84 100 80Q150 60 150 30Q148 10 130 0M166 0L182 50Q190 62 200 58L384 10M206 2L300-20M440 14L466 28L492 22L490-4',
				// phone
				'M562 30Q564 20 574 16L660-4Q674-4 678 8L704 100M562 30L586 104M572 40L676 20L694 100M608 20h24',
				// scooter
				'M150 136Q146 146 158 144L210 90Q206 78 196 86zM182 116Q180 96 200 102Q226 120 222 140Q214 156 200 146Q186 138 182 116M202 150Q220 240 160 250M222 140Q260 170 272 204M30 320Q32 290 70 262Q80 240 110 220Q130 200 160 206Q160 230 134 246Q170 250 164 280L154 300L40 334Q30 334 30 320M64 262Q110 240 134 246M66 334Q80 370 116 360Q144 346 144 314M80 320Q100 346 120 316M76 290Q96 276 120 276Q114 292 86 296zM200 280Q200 220 250 206Q300 206 302 236Q290 240 270 244L204 286zM216 286Q240 320 280 302Q302 280 298 240M150 296L200 280',
				// heart, player
				'M380 102Q380 84 402 86Q418 66 434 80Q440 98 428 110L410 124Q386 116 380 102zM370 166Q370 154 390 152L424 146Q440 146 446 162M370 166L386 268Q388 280 400 278L458 266Q470 262 468 252L452 172Q450 160 440 162L380 172M398 206Q400 188 418 188Q438 196 434 210Q424 224 410 220Q398 216 398 206M410 206L420 212L424 200M408 242L444 230Q450 240 440 244L414 252Q404 250 408 242',
				// glasses
				'M250 376Q300 350 350 360Q380 370 394 400M256 384Q310 360 350 374Q370 382 384 400M378 322Q380 312 394 316Q430 330 430 370V460M378 322Q410 334 414 380V440M322 410Q340 396 354 424M318 420Q336 410 346 440M414 440L432 460L410 462',
				// backpack
				'M24 480Q22 468 36 464L190 422Q210 424 216 456Q214 474 204 480M24 480L34 524Q40 534 52 530L80 522M50 470L64 526M44 472L58 528M160 432Q176 444 184 480M170 428Q190 444 196 480M80 540Q80 500 120 496Q170 482 190 520L212 580L240 640Q240 660 224 668L140 690Q110 696 100 680L88 620zM82 600Q140 620 212 580M64 620Q60 610 88 612M64 620L72 668Q78 680 96 676M212 580Q230 566 242 580L250 610Q250 626 240 630M98 500Q100 470 120 470Q140 470 142 492M110 496Q112 480 122 482Q132 484 132 492M120 600L134 598L138 616L128 622zM176 588L188 584L194 602L182 608zM0 660Q50 660 46 690Q40 720 0 726M0 550L14 610L0 622',
				// penguin
				'M296 640L294 580Q300 520 360 518Q420 524 426 580L434 620Q452 650 454 690Q450 720 430 722L340 738Q320 740 310 710Q290 700 286 660Q286 640 296 640M300 640L312 712M404 636Q408 616 426 620M404 636L420 690Q436 712 452 690M420 690L450 682M326 594q4-16 18-6M356 584q10-14 22-2M336 602Q350 620 362 600M378 734L380 750L346 756Q340 770 350 774L382 768L388 732M382 768L422 766L420 728M386 740L400 748L398 766',
				// paw, lens handle, flower
				'M470 430q10-16 24-2 8 20-2 26-20-4-22-24M496 412q6-16 20-8 10 18 4 28-18 4-24-20M530 404q12-8 22 4 6 18 0 22-16-4-22-26M470 468q10-14 22 0 6 16-4 18-16 0-18-18M502 450Q510 432 536 442M502 450Q496 480 510 498Q520 504 546 494M602 520Q606 510 616 512L646 552Q644 564 634 560zM560 634Q560 600 582 600Q606 602 606 634Q640 620 646 644Q640 672 612 672Q636 704 614 716Q590 720 586 690Q570 724 550 716Q536 690 562 674Q520 664 524 640Q540 620 560 634M586 640v-8M602 650l10-6M598 674l6 8M574 674l-6 6M570 652l-8-4',
				// corners and bolt
				'M700 300L696 440M510 320Q550 330 590 316M84 732L122 738L116 764L132 770L102 814L100 790L78 786zM138 856a9 9 0 1 0 12-6L158 824L194 826L186 858a8 8 0 1 1-8-6L182 836L160 834',
				// hands with heart
				'M206 910Q204 890 230 886Q232 860 260 830Q300 800 320 804Q360 816 378 846Q380 860 370 860Q330 850 320 880Q330 910 360 918Q400 926 394 948Q380 954 330 950L276 948Q270 968 256 966Q230 950 206 910zM290 850Q310 824 340 832Q356 840 362 856M378 846Q380 800 430 790Q480 780 510 820Q540 850 536 864Q566 862 568 886Q550 920 520 940Q500 940 500 916Q460 926 420 948Q400 940 410 922Q450 910 460 880Q460 844 420 840Q400 846 384 860M390 820Q420 800 450 816Q476 830 484 846M374 886Q374 872 392 876Q404 870 410 884L394 904Q376 900 374 886',
				// tablet, blob, page
				'M350 1030Q350 1020 360 1016L500 972Q520 970 524 984L540 1046M362 1046L364 1030L520 990M430 990L470 958L486 974M106 1040Q110 1010 140 1012Q166 1020 164 1046M128 1010Q150 976 200 980Q250 990 250 1046M204 1026h4M228 1036h6M0 840L24 832Q34 832 38 842L58 900Q58 912 48 916L0 938M0 870L16 866M0 880L18 874M0 890L20 886M20 970Q28 960 34 972Q26 1010 36 1044M20 970Q12 1010 22 1044',
				// propeller
				'M584 810Q594 802 602 820Q604 840 596 850Q584 840 584 810M588 856Q600 840 612 852Q612 866 598 868Q586 866 588 856M598 868Q614 880 616 894Q604 898 600 886zM612 848Q640 790 700 770'
			]
		}
	];

	function starPath([x, y, r]: number[], points: number, inner: number) {
		const steps = points * 2;
		const turn = points === 5 ? 0.12 : 0;
		let d = '';
		for (let i = 0; i < steps; i++) {
			const a = (i / steps) * Math.PI * 2 - Math.PI / 2 + turn;
			const len = i % 2 ? r * inner : r;
			d += `${i ? 'L' : 'M'}${Math.round(x + len * Math.cos(a))} ${Math.round(y + len * Math.sin(a))}`;
		}
		return d + 'z';
	}

	onMount(() => {
		chat.scrollTop = chat.scrollHeight;
	});
</script>

<div class="page">
	<main class="panel">
		<header class="topbar">
			<svg class="avatar" viewBox="0 0 212 212" aria-hidden="true">
				<path
					fill="#dfe5e7"
					d="M106.251.5C164.653.5 212 47.846 212 106.25S164.653 212 106.25 212C47.846 212 .5 164.654.5 106.25S47.846.5 106.251.5z"
				/>
				<path
					fill="#fff"
					d="M173.561 171.615a62.767 62.767 0 0 0-2.065-2.955 67.7 67.7 0 0 0-2.608-3.299 70.112 70.112 0 0 0-6.855-7.108 71.134 71.134 0 0 0-5.95-4.8 72.2 72.2 0 0 0-10.1-6.2C136.5 142.5 122.5 139.5 106.3 139.5s-30.4 3-39.9 7.6a72 72 0 0 0-10.1 6.2 71 71 0 0 0-12.8 11.9 68 68 0 0 0-2.6 3.3 63 63 0 0 0-2 3c17 20.500 41 34.500 67.400 34.500s50.300-14 67.200-34.400z"
				/>
				<circle fill="#fff" cx="106" cy="88" r="38" />
			</svg>
			<h1>{contact}</h1>
			<button class="icon" aria-label="Search">
				<svg viewBox="0 0 24 24" width="40" height="40">
					<path
						fill="currentColor"
						d="M15.009 13.805h-.636l-.22-.219a5.184 5.184 0 0 0 1.256-3.386 5.207 5.207 0 1 0-5.207 5.208 5.183 5.183 0 0 0 3.385-1.255l.221.22v.635l4.004 3.999 1.194-1.195-3.997-4.007zm-4.808 0a3.605 3.605 0 1 1 0-7.210 3.605 3.605 0 0 1 0 7.210z"
					/>
				</svg>
			</button>
			<button class="icon" aria-label="Menu">
				<svg viewBox="0 0 24 24" width="30" height="30">
					<path
						fill="currentColor"
						d="M12 7a2 2 0 1 0-.001-4.001A2 2 0 0 0 12 7zm0 2a2 2 0 1 0-.001 3.999A2 2 0 0 0 12 9zm0 6a2 2 0 1 0-.001 3.999A2 2 0 0 0 12 15z"
					/>
				</svg>
			</button>
		</header>

		<section class="conversation" aria-label="Messages">
			<svg class="wallpaper" aria-hidden="true">
				{#each copies as copy (copy)}
					<g transform="scale({1 / 3}) translate({834 + copy * tile} 0)">
						{#each sheets as sheet}
							<g transform="translate({sheet.x} {sheet.y})">
								{#each sheet.circles as [cx, cy, r]}
									<circle {cx} {cy} {r} />
								{/each}
								{#each sheet.stars as star}
									<path d={starPath(star, 5, 0.55)} />
								{/each}
								{#each sheet.sparkles as sparkle}
									<path d={starPath(sparkle, 4, 0.33)} />
								{/each}
								{#each sheet.paths as d}
									<path {d} />
								{/each}
							</g>
						{/each}
					</g>
				{/each}
			</svg>

			<div class="messages" bind:this={chat}>
				{#each messages as message, i}
					<div class="row" class:out={message.out} class:follow={i > 0 && !message.tail}>
						<div class="bubble" class:tailed={message.tail}>
							{#if message.tail}
								<svg class="tail" viewBox="0 0 10 14" width="10" height="14" aria-hidden="true">
									<path class="tail-shadow" d="M9 1H2Q0 1 1 3L9 14z" />
									<path class="tail-fill" d="M10 0H2Q0 0 1 2L9 12H10z" />
								</svg>
							{/if}
							<p dir="rtl" lang="ar">{message.text}</p>
							<div class="meta">
								<time>{message.time}</time>
								{#if message.out}
									<svg viewBox="0 0 20 14" width="20" height="14" role="img" aria-label="Read">
										<path
											fill="none"
											stroke="#53bdeb"
											stroke-width="2"
											d="M1 7.500L5.500 12L13.500 1.500M9.500 11L11 12L19 1.500"
										/>
									</svg>
								{/if}
							</div>
						</div>
					</div>
				{/each}
			</div>
			<div class="scrollbar"></div>
		</section>

		<footer class="composer">
			<button class="icon" aria-label="Emoji">
				<svg viewBox="0 0 24 24" width="32" height="32">
					<circle cx="12" cy="12" r="10.300" fill="none" stroke="currentColor" stroke-width="1.600" />
					<ellipse cx="9" cy="9.700" rx="1.400" ry="1.900" fill="currentColor" />
					<ellipse cx="15" cy="9.700" rx="1.400" ry="1.900" fill="currentColor" />
					<path
						fill="currentColor"
						fill-rule="evenodd"
						d="M5.700 13.100c3.900.9 8.700.9 12.600 0 .2 3.600-2.500 5.600-6.300 5.600s-6.500-2-6.300-5.600zm1.300 1.300.6 1.500h8.800l.6-1.500c-3.200.6-6.800.6-10 0z"
					/>
				</svg>
			</button>
			<button class="icon" aria-label="Attach">
				<svg viewBox="0 0 24 24" width="30" height="30">
					<path
						fill="currentColor"
						d="M1.816 15.556v.002c0 1.502.584 2.912 1.646 3.972s2.472 1.647 3.974 1.647a5.580 5.580 0 0 0 3.972-1.645l9.547-9.548c.769-.768 1.147-1.767 1.058-2.817-.079-.968-.548-1.927-1.319-2.698-1.594-1.592-4.068-1.711-5.517-.262l-7.916 7.915c-.881.881-.792 2.250.214 3.261.959.958 2.423 1.053 3.263.215l5.511-5.512c.28-.28.267-.722.053-.936l-.244-.244c-.191-.191-.567-.349-.957.040l-5.506 5.506c-.18.180-.635.127-.976-.214-.098-.097-.576-.613-.213-.973l7.915-7.917c.818-.817 2.267-.699 3.230.262.5.501.802 1.100.849 1.685.051.573-.156 1.111-.589 1.543l-9.547 9.549a3.970 3.970 0 0 1-2.829 1.171 3.975 3.975 0 0 1-2.830-1.173 3.973 3.973 0 0 1-1.172-2.828c0-1.071.415-2.076 1.172-2.830l7.209-7.211c.157-.157.264-.579.028-.814L11.500 4.360a.572.572 0 0 0-.834.018l-7.205 7.207a5.577 5.577 0 0 0-1.645 3.971z"
					/>
				</svg>
			</button>
			<label class="field">
				<input type="text" placeholder="Type a message" aria-label="Type a message" bind:value={draft} />
				<span class="dot"></span>
			</label>
			<button class="icon" aria-label="Voice message">
				<svg viewBox="0 0 24 24" width="32" height="32">
					<path
						fill="currentColor"
						d="M11.999 14.942c2.001 0 3.531-1.530 3.531-3.531V4.350c0-2.001-1.530-3.531-3.531-3.531S8.469 2.350 8.469 4.350v7.061c0 2.001 1.530 3.531 3.530 3.531zm6.238-3.530c0 3.531-2.942 6.002-6.237 6.002s-6.237-2.471-6.237-6.002H3.761c0 4.001 3.178 7.297 7.061 7.885v3.884h2.354v-3.884c3.884-.588 7.061-3.884 7.061-7.885h-2z"
					/>
				</svg>
			</button>
		</footer>
	</main>
</div>

<style>
	:global(body) {
		margin: 0;
		background: linear-gradient(#00a884 0 151px, #dddbd9 151px, #d0d5d8 100vh);
	}

	.page {
		box-sizing: border-box;
		height: 100vh;
		padding: 16px 24px 0 0;
		font-family: 'Segoe UI', 'Open Sans', 'Noto Sans', sans-serif;
		color: #111b21;
	}

	.panel {
		display: flex;
		flex-direction: column;
		height: 100%;
		border-left: 2px solid #e2e5e8;
		background-color: #f0f2f5;
	}

	.topbar {
		display: flex;
		align-items: center;
		height: 75px;
		flex: none;
		padding: 0 24px 2px 20px;
		border-bottom: 1px solid #e6e8ec;
		box-sizing: border-box;
	}

	.avatar {
		width: 50px;
		height: 50px;
		margin-right: 18px;
	}

	h1 {
		flex: 1;
		margin: 0;
		font-size: 19px;
		font-weight: 400;
		line-height: 26px;
	}

	.icon {
		display: flex;
		align-items: center;
		justify-content: center;
		width: 42px;
		height: 42px;
		padding: 0;
		border: none;
		background: none;
		color: #54656f;
		cursor: pointer;
	}

	.topbar .icon {
		padding-top: 2px;
	}

	.topbar .icon + .icon {
		margin-left: 20px;
	}

	.conversation {
		position: relative;
		flex: 1;
		min-height: 0;
		background-color: #efeae2;
	}

	.wallpaper {
		position: absolute;
		inset: 0;
		width: 100%;
		height: 100%;
		fill: none;
		stroke: #f5f1eb;
		stroke-width: 5;
		stroke-linejoin: round;
		stroke-linecap: round;
	}

	.messages {
		position: relative;
		box-sizing: border-box;
		height: 100%;
		padding: 0 85px 26px 78px;
		overflow: hidden;
	}

	.row {
		display: flex;
		margin-top: 15px;
	}

	.row.out {
		justify-content: flex-end;
	}

	.row.follow {
		margin-top: 2px;
	}

	.bubble {
		position: relative;
		box-sizing: border-box;
		height: 65px;
		padding: 7px 9px 4px 11px;
		border-radius: 9px;
		background-color: #fff;
		box-shadow: 0 1px 1px rgba(11, 20, 26, 0.16);
		--bubble: #fff;
	}

	.bubble.tailed {
		border-top-left-radius: 0;
	}

	.out .bubble {
		background-color: #d9fdd3;
		--bubble: #d9fdd3;
	}

	.out .bubble.tailed {
		border-top-left-radius: 9px;
		border-top-right-radius: 0;
	}

	.tail {
		position: absolute;
		top: 0;
		left: -9px;
	}

	.out .tail {
		left: auto;
		right: -9px;
		transform: scaleX(-1);
	}

	.tail-fill {
		fill: var(--bubble);
	}

	.tail-shadow {
		fill: rgba(11, 20, 26, 0.14);
	}

	p {
		margin: 0;
		font-family: 'Segoe UI', 'DejaVu Sans', sans-serif;
		font-size: 17px;
		line-height: 26px;
		white-space: nowrap;
	}

	.meta {
		display: flex;
		align-items: center;
		justify-content: flex-end;
		gap: 4px;
		margin-top: 10px;
		padding-left: 11px;
		font-size: 13px;
		line-height: 18px;
		color: #667781;
	}

	.scrollbar {
		position: absolute;
		right: 0;
		bottom: 0;
		width: 7px;
		height: 320px;
		background-color: rgba(11, 20, 26, 0.2);
	}

	.composer {
		display: flex;
		align-items: center;
		flex: none;
		height: 77px;
		padding: 0 24px 0 25px;
	}

	.composer .icon + .icon {
		margin: 0 14px 0 9px;
	}

	.field {
		display: flex;
		align-items: center;
		flex: 1;
		height: 52px;
		margin-right: 14px;
		padding: 0 21px;
		border-radius: 10px;
		background-color: #fff;
	}

	input {
		flex: 1;
		min-width: 0;
		padding: 0;
		border: none;
		outline: none;
		background: none;
		font: inherit;
		font-size: 18px;
		line-height: 26px;
		color: inherit;
	}

	input::placeholder {
		color: #667781;
		opacity: 1;
	}

	.dot {
		width: 8px;
		height: 8px;
		margin-top: 10px;
		border-radius: 50%;
		background-color: #008069;
	}
</style>
